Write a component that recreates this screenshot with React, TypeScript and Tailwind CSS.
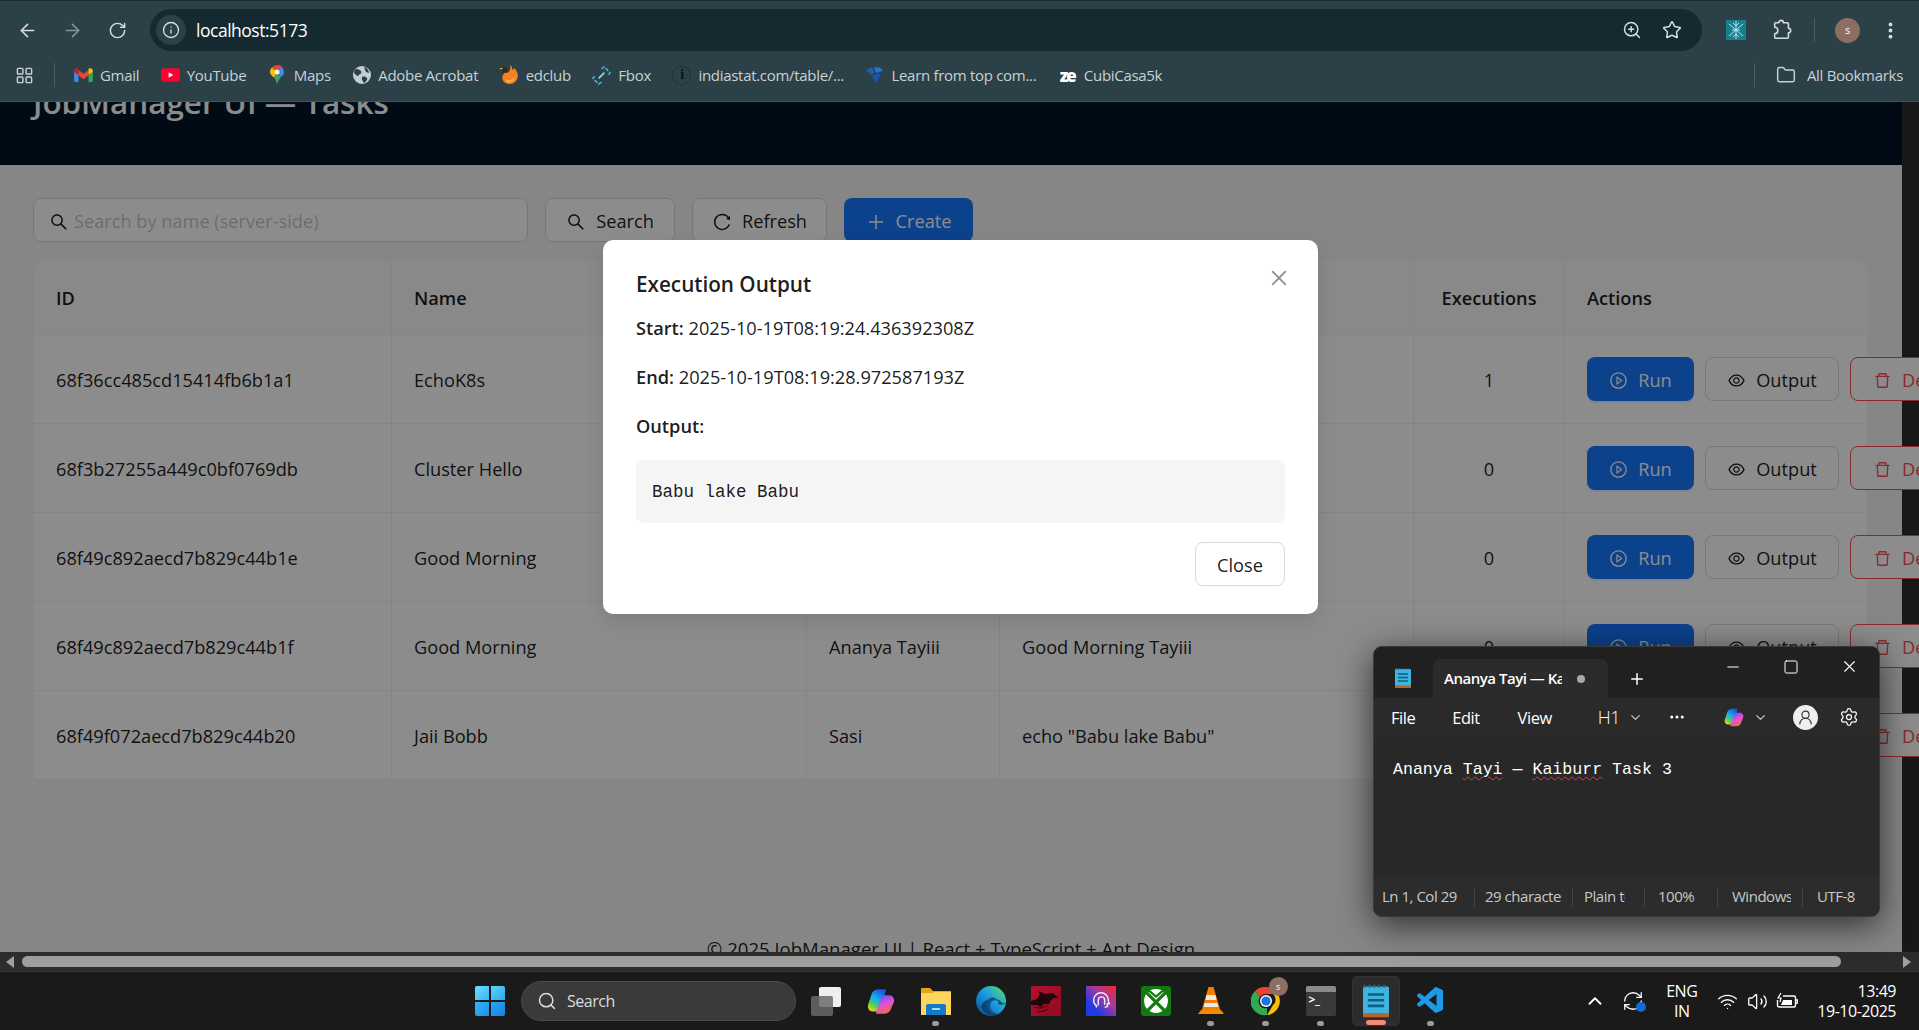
import {
  ArrowLeft,
  ArrowRight,
  RotateCw,
  Info,
  ZoomIn,
  Star,
  EllipsisVertical,
  LayoutGrid,
  Folder,
  Minus,
  Square,
  X,
  Plus,
  ChevronDown,
  ChevronUp,
  Ellipsis,
  UserRound,
  Settings,
  Search as SearchIcon,
  Wifi,
  Volume2,
  RefreshCw,
} from "lucide-react"
import {
  AiOutlineSearch,
  AiOutlineReload,
  AiOutlinePlus,
  AiOutlinePlayCircle,
  AiOutlineEye,
  AiOutlineDelete,
  AiOutlineClose,
} from "react-icons/ai"
import { VscVscode } from "react-icons/vsc"
import type { ReactNode } from "react"

const tasks = [
  { id: "68f36cc485cd15414fb6b1a1", name: "EchoK8s", owner: "Sasi", command: "echo hello", runs: 1 },
  { id: "68f3b27255a449c0bf0769db", name: "Cluster Hello", owner: "Sasi", command: "echo Hello", runs: 0 },
  { id: "68f49c892aecd7b829c44b1e", name: "Good Morning", owner: "Ananya Tayiii", command: "Good Morning Tayiii", runs: 0 },
  { id: "68f49c892aecd7b829c44b1f", name: "Good Morning", owner: "Ananya Tayiii", command: "Good Morning Tayiii", runs: 0 },
  { id: "68f49f072aecd7b829c44b20", name: "Jaii Bobb", owner: "Sasi", command: 'echo "Babu lake Babu"', runs: 0 },
]

function GmailIcon() {
  return (
    <svg viewBox="0 0 24 18" className="h-[14px] w-[19px]">
      <path d="M0 5v11a2 2 0 0 0 2 2h3.500V8z" fill="#4285f4" />
      <path d="M24 5v11a2 2 0 0 1-2 2h-3.500V8z" fill="#34a853" />
      <path d="M5.500 9.500V2.500L12 7.500l6.500-5v7L12 14.500z" fill="#ea4335" />
      <path d="M0 5V3.500C0 .800 3-.800 5.200 .800l.3 .2v7.500z" fill="#c5221f" />
      <path d="M24 5V3.500C24 .800 21-.800 18.800 .800l-.3 .2v7.500z" fill="#fbbc04" />
    </svg>
  )
}

function YoutubeIcon() {
  return (
    <svg viewBox="0 0 20 14" className="h-[14px] w-[20px]">
      <rect width="20" height="14" rx="3" fill="#ff0033" />
      <path d="M8 4l5 3-5 3z" fill="#fff" />
    </svg>
  )
}

function MapsIcon() {
  return (
    <svg viewBox="0 0 14 20" className="h-[20px] w-[14px]">
      <path d="M4 12c1 2 2.500 4 3 8 .5-4 2-5 4-8L7 8z" fill="#34a853" />
      <path d="M7 0a7 7 0 0 1 7 7c0 2-1 3.500-3 5L7 7z" fill="#4285f4" />
      <path d="M1.800 2.500A7 7 0 0 1 7 0c2 0 3.600 .8 4.800 2L7 7z" fill="#ea4335" />
      <path d="M1.800 2.500A7 7 0 0 0 0 7c0 2 1.500 3.800 4 5.500L7 7z" fill="#fbbc04" />
      <circle cx="7" cy="7" r="2.500" fill="#f4f4f4" />
    </svg>
  )
}

function GlobeIcon() {
  return (
    <svg viewBox="0 0 18 18" className="h-[18px] w-[18px]">
      <circle cx="9" cy="9" r="9" fill="#c3ced2" />
      <path d="M3 3c3 0 4 1 5 2s0 3-1 3-1 2-2 2-3-2-4-3c0-2 1-3 2-4zM11 1c2 0 5 3 5 6l-3-1-1-2zM9 11c2-1 4 0 5 1s-1 4-3 5c-1-1-1-2-2-3z" fill="#2c4047" />
    </svg>
  )
}

function EdclubIcon() {
  return (
    <svg viewBox="0 0 20 22" className="h-[21px] w-[19px]">
      <path d="M5 8c2 1 4 0 5-2 1-2 1-4 1-6 2 2 2 4 2 5 1 0 2-1 2-2 3 3 5 7 3 12-2 5-8 6-12 4-4-2-5-7-1-11z" fill="#f58220" />
      <path d="M6 15c3 2 8 1 10-3-1 5-5 7-8 6-1 0-2-1-2-3z" fill="#ffb347" />
      <circle cx="5" cy="5" r="3" fill="#3a2a14" />
      <path d="M1 5L0 3l3 0z" fill="#ffc94d" />
    </svg>
  )
}

function FboxIcon() {
  return (
    <svg viewBox="0 0 20 20" className="h-[19px] w-[19px]" fill="none" stroke="#4fb6d8" strokeWidth="1.600">
      <path d="M10 3l3-2 6 6-2 3M10 17l-3 2-6-6 2-3" strokeDasharray="4 1.500" />
      <path d="M7 13l6-6" stroke="#7fd0ea" strokeWidth="2" />
    </svg>
  )
}

function IndiastatIcon() {
  return (
    <span className="flex h-[19px] w-[19px] items-center justify-center rounded-full border border-dotted border-[#14232a] font-['Liberation_Serif',serif] text-[14px] font-bold text-[#0c1418]">
      i
    </span>
  )
}

function LearnIcon() {
  return (
    <svg viewBox="0 0 22 22" className="h-[20px] w-[20px]">
      <path d="M1 5l7-3 3 6-4 3z" fill="#1d5fb3" />
      <path d="M10 2l7 0 4 4-8 3z" fill="#2570c8" />
      <path d="M8 12l8-3 3 1-7 11z" fill="#1a55a3" />
    </svg>
  )
}

function CubiIcon() {
  return <span className="w-[19px] text-center text-[17px] leading-none font-extrabold tracking-[-0.12em] text-white">ze</span>
}

function ExtensionIcon() {
  return (
    <svg viewBox="0 0 20 20" className="ml-[24px] h-[20px] w-[20px]">
      <rect width="20" height="20" fill="#17808f" />
      <path d="M10 1v18M3 4l14 12M17 4L3 16M6 10h8M7 3l3 3 3-3M7 17l3-3 3 3" stroke="#c6f0f4" strokeWidth=".9" fill="none" />
    </svg>
  )
}

function ChromePuzzle() {
  return (
    <svg viewBox="0 0 24 24" className="ml-[25px] h-[22px] w-[22px]" fill="none" stroke="#d5dde0" strokeWidth="1.700" strokeLinejoin="round">
      <path d="M5 4h3.500a2.500 2.500 0 0 1 5 0H18a1 1 0 0 1 1 1v5a2.500 2.500 0 0 1 0 5v5a1 1 0 0 1-1 1H5a1 1 0 0 1-1-1v-4a2.500 2.500 0 0 0 0-7V5a1 1 0 0 1 1-1z" />
    </svg>
  )
}

const bookmarks: { label: string; icon: ReactNode }[] = [
  { label: "Gmail", icon: <GmailIcon /> },
  { label: "YouTube", icon: <YoutubeIcon /> },
  { label: "Maps", icon: <MapsIcon /> },
  { label: "Adobe Acrobat", icon: <GlobeIcon /> },
  { label: "edclub", icon: <EdclubIcon /> },
  { label: "Fbox", icon: <FboxIcon /> },
  { label: "indiastat.com/table/...", icon: <IndiastatIcon /> },
  { label: "Learn from top com...", icon: <LearnIcon /> },
  { label: "CubiCasa5k", icon: <CubiIcon /> },
]

function BrowserChrome() {
  return (
    <div className="h-[102px] shrink-0 border-t border-b border-t-[#1d2d33] border-b-[#43555c] bg-[#2c4047] tracking-[-0.03em] text-[#d5dde0]">
      {/* Toolbar */}
      <div className="flex h-[58px] items-center">
        <div className="flex w-[150px] items-center pl-[17px]">
          <ArrowLeft className="h-[21px] w-[21px]" strokeWidth={1.8} />
          <ArrowRight className="ml-[24px] h-[21px] w-[21px] text-[#83949a]" strokeWidth={1.8} />
          <RotateCw className="ml-[25px] h-[19px] w-[19px]" strokeWidth={1.8} />
        </div>
        <div className="flex h-[42px] w-[1552px] items-center rounded-full bg-[#152a30] pr-[20px]">
          <span className="ml-[6px] flex h-[30px] w-[30px] items-center justify-center rounded-full bg-[#2c4047]">
            <Info className="h-[18px] w-[18px]" strokeWidth={1.8} />
          </span>
          <span className="ml-[10px] text-[17.5px] text-white">localhost:5173</span>
          <ZoomIn className="ml-auto h-[20px] w-[20px]" strokeWidth={1.8} />
          <Star className="ml-[20px] h-[20px] w-[20px]" strokeWidth={1.8} />
        </div>
        <ExtensionIcon />
        <ChromePuzzle />
        <span className="ml-[21px] h-[24px] w-px bg-[#4b5e65]" />
        <span className="ml-[20px] flex h-[25px] w-[25px] items-center justify-center rounded-full bg-[#8d6e63] text-[11px] text-white">s</span>
        <EllipsisVertical className="ml-[20px] h-[21px] w-[21px]" strokeWidth={2.4} />
      </div>

      {/* Bookmarks bar */}
      <div className="flex h-[32px] items-center pr-[16px] text-[15px] leading-none tracking-[-0.02em] text-[#c6d2d6]">
        <LayoutGrid className="ml-[15px] h-[19px] w-[19px]" strokeWidth={1.8} />
        <span className="mr-[19px] ml-[20px] h-[24px] w-px bg-[#4b5e65]" />
        <div className="flex items-center gap-[21.5px]">
          {bookmarks.map((b) => (
            <div key={b.label} className="flex items-center gap-[7px]">
              <span className="flex w-[19px] justify-center">{b.icon}</span>
              <span>{b.label}</span>
            </div>
          ))}
        </div>
        <span className="ml-auto h-[24px] w-px bg-[#4b5e65]" />
        <Folder className="ml-[21px] h-[20px] w-[20px]" strokeWidth={1.7} />
        <span className="ml-[11px]">All Bookmarks</span>
      </div>
    </div>
  )
}

function TaskTable() {
  const th = "border-r border-b border-[#f0f0f0] bg-[#fafafa] px-[22px] pt-[2px] font-semibold"
  const td = "border-r border-b border-[#f0f0f0] bg-white px-[22px] pt-[4px]"
  return (
    <table className="w-[1833px] table-fixed border-separate border-spacing-0 text-[18.2px] text-black/90">
      <colgroup>
        <col className="w-[358px]" />
        <col className="w-[415px]" />
        <col className="w-[193px]" />
        <col className="w-[414px]" />
        <col className="w-[151px]" />
        <col className="w-[302px]" />
      </colgroup>
      <thead>
        <tr className="h-[74px] text-left">
          <th className={`${th} rounded-tl-[10px]`}>ID</th>
          <th className={th}>Name</th>
          <th className={th}>Owner</th>
          <th className={th}>Command</th>
          <th className={`${th} text-center`}>Executions</th>
          <th className="rounded-tr-[10px] border-b border-[#f0f0f0] bg-[#fafafa] px-[22px] pt-[2px] font-semibold">Actions</th>
        </tr>
      </thead>
      <tbody>
        {tasks.map((t) => (
          <tr key={t.id} className="h-[89px]">
            <td className={td}>{t.id}</td>
            <td className={td}>{t.name}</td>
            <td className={td}>{t.owner}</td>
            <td className={td}>{t.command}</td>
            <td className={`${td} text-center`}>{t.runs}</td>
            <td className="border-b border-[#f0f0f0] bg-white px-[22px]">
              <div className="flex gap-[11px] whitespace-nowrap">
                <button className="flex h-[44px] w-[107px] shrink-0 items-center justify-center gap-[10px] rounded-[8px] bg-[#1677ff] pt-[3px] text-white shadow-[0_2px_0_rgba(5,145,255,0.1)]">
                  <AiOutlinePlayCircle className="text-[19px]" /> Run
                </button>
                <button className="flex h-[44px] w-[134px] shrink-0 items-center justify-center gap-[10px] rounded-[8px] border border-[#d9d9d9] bg-white pt-[3px]">
                  <AiOutlineEye className="text-[19px]" /> Output
                </button>
                <button className="flex h-[44px] w-[134px] shrink-0 items-center gap-[10px] rounded-[8px] border border-[#ff4d4f] bg-white pt-[3px] pl-[22px] text-[#ff4d4f]">
                  <AiOutlineDelete className="text-[19px]" /> Delete
                </button>
              </div>
            </td>
          </tr>
        ))}
      </tbody>
    </table>
  )
}

function OutputModal() {
  return (
    <div className="absolute top-[138px] left-[603px] w-[715px] rounded-[10px] bg-white px-[33px] pt-[29px] pb-[28px] text-[18.2px] text-black/90 shadow-[0_8px_20px_rgba(0,0,0,0.1)]">
      <button className="absolute top-[27px] right-[28px] text-[#8c8c8c]">
        <AiOutlineClose className="text-[22px]" />
      </button>
      <h2 className="text-[20.7px] leading-[30px] font-semibold">Execution Output</h2>
      <p className="mt-[15px] leading-[28px]">
        <span className="font-semibold">Start:</span> 2025-10-19T08:19:24.436392308Z
      </p>
      <p className="mt-[21px] leading-[28px]">
        <span className="font-semibold">End:</span> 2025-10-19T08:19:28.972587193Z
      </p>
      <p className="mt-[21px] leading-[28px] font-semibold">Output:</p>
      <pre className="mt-[20px] flex h-[63px] items-center rounded-[8px] bg-[#f5f5f5] px-[16px] pt-[2px] font-['Liberation_Mono',monospace] text-[17.5px]">Babu lake Babu</pre>
      <div className="mt-[19px] flex justify-end">
        <button className="h-[44px] w-[90px] rounded-[8px] border border-[#d9d9d9] pt-[3px] shadow-[0_2px_0_rgba(0,0,0,0.02)]">Close</button>
      </div>
    </div>
  )
}

function NotepadWindow() {
  return (
    <div className="absolute top-[646px] left-[1373px] flex h-[271px] w-[507px] flex-col overflow-hidden rounded-[9px] border border-[#3a3a3a] bg-[#282828] tracking-[-0.03em] text-white shadow-[0_8px_34px_rgba(0,0,0,0.65)]">
      {/* Title bar */}
      <div className="flex h-[51px] shrink-0 items-end bg-[#202020]">
        <span className="mb-[10px] ml-[21px] w-[38px]">
          <NotepadIcon className="h-[20px] w-[16px]" />
        </span>
        <div className="flex h-[39px] w-[175px] items-center rounded-t-[8px] bg-[#2b2b2b] pl-[11px] text-[15px] font-semibold">
          <span className="w-[118px] overflow-hidden whitespace-nowrap">Ananya Tayi — Kaiburr Task 3</span>
          <span className="ml-[15px] h-[8px] w-[8px] rounded-full bg-[#a8a8a8]" />
        </div>
        <Plus className="mb-[10px] ml-[20px] h-[18px] w-[18px]" strokeWidth={2} />
        <div className="mb-[22px] ml-auto flex items-center gap-[41px] pr-[20px]">
          <Minus className="h-[18px] w-[18px]" strokeWidth={1.4} />
          <Square className="h-[16px] w-[16px]" strokeWidth={1.5} />
          <X className="h-[19px] w-[19px]" strokeWidth={1.4} />
        </div>
      </div>

      {/* Menu bar */}
      <div className="flex h-[40px] shrink-0 items-center bg-[#2a2a2a] pl-[17px] text-[16.5px]">
        <span>File</span>
        <span className="ml-[37px]">Edit</span>
        <span className="ml-[38px]">View</span>
        <span className="mb-[2px] ml-[46px] text-[18px] font-light">H1</span>
        <ChevronDown className="mb-[2px] ml-[8px] h-[15px] w-[15px] text-[#c9c9c9]" />
        <Ellipsis className="mb-[2px] ml-[25px] h-[18px] w-[18px]" />
        <CopilotIcon className="mb-[2px] ml-[38px] h-[20px] w-[20px]" />
        <ChevronDown className="mb-[2px] ml-[9px] h-[15px] w-[15px] text-[#c9c9c9]" />
        <span className="mb-[2px] ml-[25px] flex h-[25px] w-[25px] items-center justify-center rounded-full bg-[#eeeeee]">
          <UserRound className="h-[17px] w-[17px] text-[#333]" strokeWidth={1.6} />
        </span>
        <Settings className="mb-[2px] ml-[21px] h-[20px] w-[20px]" strokeWidth={1.5} />
      </div>

      {/* Editor */}
      <div className="flex-1 bg-[#282828] pt-[20px] pl-[19px] font-['Liberation_Mono',monospace] text-[16.6px] leading-[24px] tracking-normal whitespace-pre">
        Ananya{" "}
        <span className="underline decoration-[#e04040] decoration-wavy decoration-1 underline-offset-2">Tayi</span>
        {" — "}
        <span className="underline decoration-[#e04040] decoration-wavy decoration-1 underline-offset-2">Kaiburr</span>
        {" Task 3"}
      </div>

      {/* Status bar */}
      <div className="flex h-[39px] shrink-0 items-center bg-[#2c2c2c] text-[15px] text-[#c8c8c8]">
        <span className="w-[100px] shrink-0 pl-[8px]">Ln 1, Col 29</span>
        <span className="h-[20px] w-px shrink-0 bg-[#444]" />
        <div className="w-[97px] shrink-0 pl-[10px]">
          <span className="block w-[77px] overflow-hidden whitespace-nowrap">29 characters</span>
        </div>
        <span className="h-[20px] w-px shrink-0 bg-[#444]" />
        <div className="w-[71px] shrink-0 pl-[11px]">
          <span className="block w-[41px] overflow-hidden whitespace-nowrap">Plain text</span>
        </div>
        <span className="h-[20px] w-px shrink-0 bg-[#444]" />
        <span className="w-[72px] shrink-0 pl-[13px]">100%</span>
        <span className="h-[20px] w-px shrink-0 bg-[#444]" />
        <div className="w-[84px] shrink-0 pl-[14px]">
          <span className="block w-[59px] overflow-hidden whitespace-nowrap">Windows (CRLF)</span>
        </div>
        <span className="h-[20px] w-px shrink-0 bg-[#444]" />
        <span className="pl-[14px]">UTF-8</span>
      </div>
    </div>
  )
}

function NotepadIcon({ className }: { className?: string }) {
  return (
    <svg viewBox="0 0 16 20" className={className}>
      <rect y="1" width="16" height="18" rx="1" fill="#3fb4de" />
      <rect y="17.500" width="16" height="2.500" fill="#b8632a" />
      <path d="M3 6h10M3 9.500h10M3 13h10" stroke="#0d5d85" strokeWidth="1.600" />
      <path d="M1 0v2M4 0v2M7 0v2M10 0v2M13 0v2" stroke="#1d6f96" strokeWidth="1" />
    </svg>
  )
}

function CopilotIcon({ className }: { className?: string }) {
  return (
    <svg viewBox="0 0 24 24" className={className}>
      <defs>
        <linearGradient id="cpA" x1="0.700" y1="0" x2="0.200" y2="1">
          <stop offset="0" stopColor="#0f5ae8" />
          <stop offset="0.450" stopColor="#16b0ee" />
          <stop offset="0.750" stopColor="#5ed04a" />
          <stop offset="1" stopColor="#f8d21c" />
        </linearGradient>
        <linearGradient id="cpB" x1="0.300" y1="0" x2="0.700" y2="1">
          <stop offset="0" stopColor="#7a48f8" />
          <stop offset="0.500" stopColor="#e254d0" />
          <stop offset="1" stopColor="#f86c30" />
        </linearGradient>
      </defs>
      <path d="M11 2h4c1.500 0 1.500 1 1 2l-5 15c-.5 1.500-1.500 2-3 2H5c-3 0-5-3-4-6l3-9c1-3 4-4 7-4z" fill="url(#cpA)" />
      <path d="M15 7h4c3 0 5 3 4 6l-3 7c-1 2-3 3-5 3h-6c-1.500 0-1.500-1-1-2l4-11c.5-2 1.500-3 3-3z" fill="url(#cpB)" />
    </svg>
  )
}

function TaskIcon({ children, dot, active }: { children: ReactNode; dot?: boolean; active?: boolean }) {
  return (
    <div className="flex w-[55px] justify-center">
      <div className={`relative flex h-[50px] w-[48px] items-center justify-center rounded-[5px] ${active ? "border border-[#333] bg-[#2c2c2c]" : ""}`}>
        {children}
        {dot && <span className="absolute bottom-[0px] h-[5px] w-[7px] rounded-full bg-[#9a9a9a]" />}
        {active && <span className="absolute bottom-[0px] h-[5px] w-[20px] rounded-full bg-[#f58a72]" />}
      </div>
    </div>
  )
}

function Taskbar() {
  return (
    <div className="flex h-[59px] shrink-0 items-center border-t border-[#3a3a3a] bg-[#1a1a1a] tracking-[-0.03em] text-white">
      {/* Start */}
      <div className="ml-[475px] grid h-[30px] w-[30px] grid-cols-2 gap-[1.5px]">
        <span className="rounded-tl-[2px] bg-gradient-to-br from-[#6fdcff] to-[#35b6f2]" />
        <span className="rounded-tr-[2px] bg-gradient-to-br from-[#5cd3fb] to-[#2aa6ee]" />
        <span className="rounded-bl-[2px] bg-gradient-to-br from-[#35b4f5] to-[#1f8fe8]" />
        <span className="rounded-br-[2px] bg-gradient-to-br from-[#2aa6f2] to-[#1a82e0]" />
      </div>
      {/* Search */}
      <div className="ml-[16px] flex h-[40px] w-[275px] items-center rounded-full border border-[#4a4a4a] bg-[#3a3a3a] pl-[15px] text-[16px] text-[#dcdcdc]">
        <SearchIcon className="h-[20px] w-[20px]" strokeWidth={1.8} />
        <span className="ml-[10px]">Search</span>
      </div>
      <div className="ml-[2px] flex items-center">
        <TaskIcon>
          <span className="relative h-[29px] w-[30px]">
            <span className="absolute top-0 right-0 h-[20px] w-[22px] rounded-[2px] bg-[#efefef]" />
            <span className="absolute bottom-0 left-0 h-[20px] w-[22px] rounded-[2px] bg-[#6a6a6a]/85" />
          </span>
        </TaskIcon>
        <TaskIcon>
          <CopilotIcon className="h-[28px] w-[28px]" />
        </TaskIcon>
        <TaskIcon dot>
          <svg viewBox="0 0 30 28" className="h-[28px] w-[30px]">
            <path d="M0 2a1 1 0 0 1 1-1h8l3 3h18v24H0z" fill="#e5a50f" />
            <path d="M0 6h11l2-1h17v23H0z" fill="#ffd65c" />
            <path d="M5 28v-9a2 2 0 0 1 2-2h16a2 2 0 0 1 2 2v9z" fill="#1479c9" />
            <rect x="11" y="21" width="8" height="2" fill="#9edcff" />
          </svg>
        </TaskIcon>
        <TaskIcon>
          <svg viewBox="0 0 30 30" className="h-[30px] w-[30px]">
            <defs>
              <linearGradient id="edge" x1="0.100" y1="0.900" x2="0.900" y2="0.100">
                <stop offset="0" stopColor="#0c59a4" />
                <stop offset="0.550" stopColor="#1b9de2" />
                <stop offset="1" stopColor="#52d476" />
              </linearGradient>
            </defs>
            <circle cx="15" cy="15" r="15" fill="url(#edge)" />
            <path d="M30 17c-3 2-6 2-8 1 1-2 0-5-4-6-5-1-8 3-7 8 1 4 5 9 12 8-8 5-17-1-18-8 2-5 8-8 13-7 4 0 7 2 8 4h4z" fill="#0d3a68" opacity=".85" />
            <path d="M11 20c-1-5 2-9 7-8 2 .5 3 1.500 4 3-4-2-8 0-8 5 0 4 4 8 9 8-6 1-11-3-12-8z" fill="#104f8a" />
          </svg>
        </TaskIcon>
        <TaskIcon>
          <span className="flex h-[30px] w-[30px] items-center justify-center bg-gradient-to-br from-[#b8102c] to-[#8c0c20]">
            <svg viewBox="0 0 30 30" className="h-[30px] w-[30px]">
              <path d="M0 15l6-2 3-5-2-3 7 3 8-1 3 3 3 2-5 0-3 2-2 4-5 0-3 3-4-2-6 0z" fill="#1f080c" />
              <path d="M3 21c5 2 10 1 14-2M6 26c4 0 8-1 11-3" stroke="#2a0a10" strokeWidth="1" fill="none" />
            </svg>
          </span>
        </TaskIcon>
        <TaskIcon>
          <span className="flex h-[30px] w-[30px] items-center justify-center bg-[linear-gradient(45deg,#1f3be6_25%,#a03aa0_60%,#f52a2a)]">
            <svg viewBox="0 0 24 24" className="h-[22px] w-[22px]" fill="none" stroke="#f0e8f8" strokeWidth="1.600">
              <path d="M7 19v-2c-2-1-3-3-3-6a8 8 0 0 1 16 0v1l1 3h-2v3l-3 1" />
              <path d="M9 17v-6a3.500 3.500 0 0 1 7 0v5" />
            </svg>
          </span>
        </TaskIcon>
        <TaskIcon>
          <span className="flex h-[30px] w-[30px] items-center justify-center rounded-[3px] bg-[#107c10]">
            <svg viewBox="0 0 24 24" className="h-[26px] w-[26px]">
              <circle cx="12" cy="12" r="11" fill="#fff" />
              <path d="M3 4l18 18M21 4L3 22" stroke="#107c10" strokeWidth="3" />
              <path d="M5 2l7 6 7-6" stroke="#107c10" strokeWidth="2" fill="none" />
            </svg>
          </span>
        </TaskIcon>
        <TaskIcon dot>
          <svg viewBox="0 0 26 30" className="h-[30px] w-[26px]">
            <path d="M10.500 1h5l7 24h-19z" fill="#f57c00" />
            <path d="M8.500 9h9l1 5h-11zM6.500 17h13l1 4h-15z" fill="#e8e8e8" />
            <path d="M3 24h20l3 4H0z" fill="#f08a00" />
          </svg>
        </TaskIcon>
        <TaskIcon dot>
          <span className="relative">
            <svg viewBox="0 0 30 30" className="h-[30px] w-[30px]">
              <path d="M15 1a14 14 0 0 1 12 7H15a7 7 0 0 0-6 3L4 5a14 14 0 0 1 11-4z" fill="#ea4335" />
              <path d="M27 8a14 14 0 0 1-11 21l6-10a7 7 0 0 0 0-11z" fill="#fbbc04" />
              <path d="M16 29A14 14 0 0 1 4 5l5 6a7 7 0 0 0 7 11z" fill="#34a853" />
              <circle cx="15" cy="15" r="6" fill="#fff" />
              <circle cx="15" cy="15" r="4.600" fill="#1a73e8" />
            </svg>
            <span className="absolute -top-[9px] -right-[7px] flex h-[19px] w-[19px] items-center justify-center rounded-full bg-[#8d6e63] text-[9px] text-white">s</span>
          </span>
        </TaskIcon>
        <TaskIcon dot>
          <span className="flex h-[30px] w-[30px] flex-col overflow-hidden rounded-[2px] bg-[#3a3a3a]">
            <span className="h-[6px] bg-[#8a8a8a]" />
            <span className="ml-[3px] text-[12px] leading-[16px] font-bold">&gt;_</span>
          </span>
        </TaskIcon>
        <TaskIcon active>
          <NotepadIcon className="h-[34px] w-[26px]" />
        </TaskIcon>
        <TaskIcon dot>
          <VscVscode className="text-[32px] text-[#1c9ce8]" />
        </TaskIcon>
      </div>

      {/* Tray */}
      <div className="ml-auto flex items-center pr-[23px] text-[16px] leading-[20px]">
        <ChevronUp className="h-[22px] w-[22px]" strokeWidth={2} />
        <span className="relative ml-[16px] flex">
          <RefreshCw className="h-[22px] w-[22px]" strokeWidth={1.4} />
          <span className="absolute right-[-2px] bottom-[0px] h-[10px] w-[10px] rounded-full bg-[#0f6cd6]" />
        </span>
        <div className="ml-[22px] flex flex-col items-center">
          <span>ENG</span>
          <span>IN</span>
        </div>
        <Wifi className="ml-[20px] h-[21px] w-[21px]" strokeWidth={1.6} />
        <Volume2 className="ml-[9px] h-[21px] w-[21px]" strokeWidth={1.5} />
        <svg viewBox="0 0 22 18" className="ml-[8px] h-[18px] w-[22px]" fill="none" stroke="#fff" strokeWidth="1.400">
          <path d="M7 4h11a1.500 1.500 0 0 1 1.500 1.500v8a1.500 1.500 0 0 1-1.500 1.500H3a1.500 1.500 0 0 1-1.500-1.500V8" />
          <path d="M20 8h1.500v3H20" />
          <path d="M5 13l2-5h9v5z" fill="#fff" stroke="none" />
          <path d="M5 1L2 6h3l-1 4" strokeWidth="1.200" />
        </svg>
        <div className="ml-[19px] flex flex-col items-end">
          <span>13:49</span>
          <span>19-10-2025</span>
        </div>
      </div>
    </div>
  )
}

export default function App() {
  return (
    <div className="relative flex h-screen w-screen flex-col overflow-hidden font-['Open_Sans',sans-serif]">
      <BrowserChrome />

      <main className="relative min-h-0 flex-1 overflow-hidden bg-[#2c2c2c]">
        {/* Page, scrolled down a little; the table runs past its right edge */}
        <div className="-mt-[37px] h-[900px] w-[1902px] bg-[#f5f5f5]">
          <header className="h-[100px] bg-[#001529] pt-[17px] pl-[33px]">
            <h1 className="text-[31.4px] leading-[40px] font-semibold text-white">JobManager UI — Tasks</h1>
          </header>
          <div className="pt-[33px] pl-[34px]">
            <div className="-ml-[1px] flex gap-[17px] text-[18.2px] text-black/90">
              <div className="flex h-[44px] w-[495px] items-center rounded-[8px] border border-[#d9d9d9] bg-white pt-[3px] pl-[15px] text-black/25">
                <AiOutlineSearch className="text-[20px] text-black/90" />
                <span className="ml-[5px]">Search by name (server-side)</span>
              </div>
              <button className="flex h-[44px] w-[130px] items-center justify-center gap-[10px] rounded-[8px] border border-[#d9d9d9] bg-white pt-[3px]">
                <AiOutlineSearch className="text-[20px]" /> Search
              </button>
              <button className="flex h-[44px] w-[135px] items-center justify-center gap-[10px] rounded-[8px] border border-[#d9d9d9] bg-white pt-[3px]">
                <AiOutlineReload className="text-[20px]" /> Refresh
              </button>
              <button className="flex h-[44px] w-[129px] items-center justify-center gap-[10px] rounded-[8px] bg-[#1677ff] pt-[3px] text-white">
                <AiOutlinePlus className="text-[20px]" /> Create
              </button>
            </div>
            <div className="mt-[19px]">
              <TaskTable />
            </div>
          </div>
          <footer className="mt-[155px] text-center text-[18.6px] leading-[28px] text-black/90">
            © 2025 JobManager UI | React + TypeScript + Ant Design
          </footer>
        </div>

        <div className="absolute inset-0 bg-black/45" />
        <OutputModal />
      </main>

      {/* Horizontal scrollbar */}
      <div className="flex h-[19px] shrink-0 items-center bg-[#2c2c2c]">
        <span className="ml-[6px] h-0 w-0 border-y-[6px] border-r-[8px] border-y-transparent border-r-[#a0a0a0]" />
        <span className="ml-[8px] h-[11px] w-[1819px] rounded-full bg-[#9e9e9e]" />
        <span className="ml-[62px] h-0 w-0 border-y-[6px] border-l-[8px] border-y-transparent border-l-[#a0a0a0]" />
      </div>

      <Taskbar />
      <NotepadWindow />
    </div>
  )
}
